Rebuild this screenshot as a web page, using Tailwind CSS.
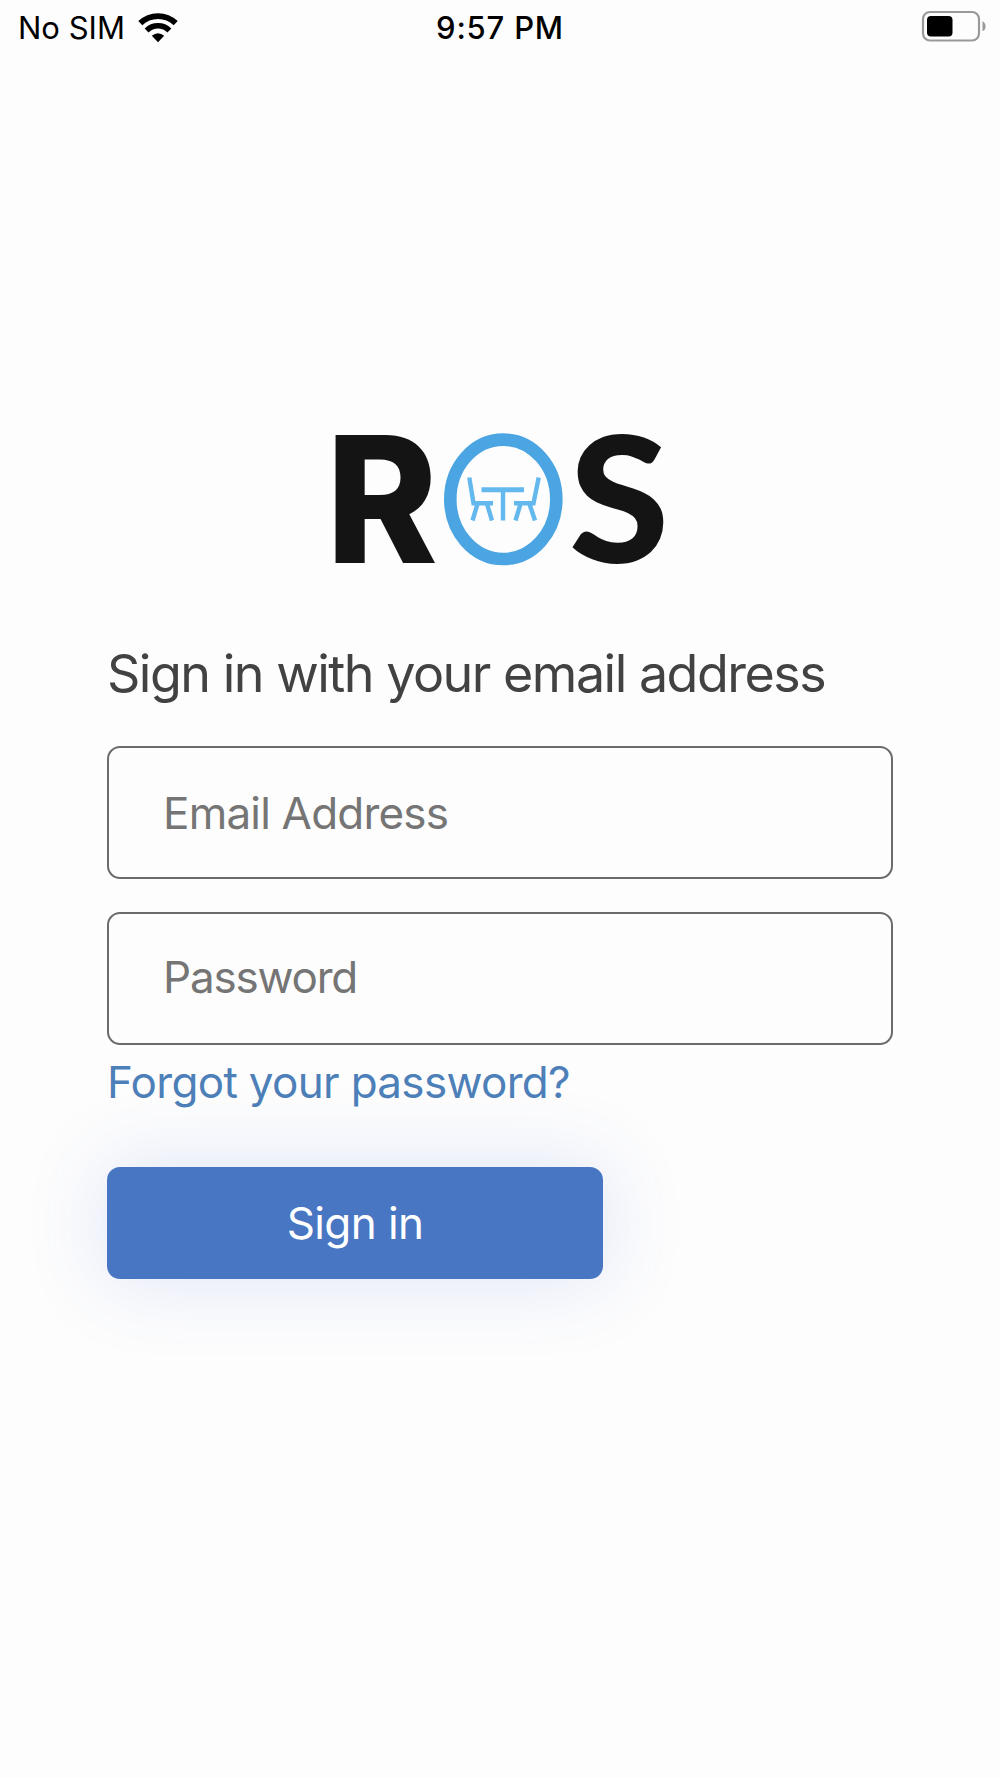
<!DOCTYPE html>
<html lang="en">
<head>
<meta charset="utf-8">
<title>Sign in</title>
<script src="https://cdn.jsdelivr.net/npm/@tailwindcss/browser@4"></script>
</head>
<body class="bg-[#fdfdfd] font-['Inter',sans-serif] w-[1000px] h-[1778px] overflow-hidden">
<header class="grid grid-cols-3 h-[54px] pl-[18px] pr-[14px] text-[31px] leading-[54px] text-black">
  <div class="flex items-center">
    <span class="w-[106px] pt-px whitespace-nowrap">No SIM</span>
    <svg class="ml-[14px] w-[40px] h-[30px]" viewBox="0 0 40 30" fill="none" stroke="#000">
      <path d="M2.3 10.2A25.5 25.5 0 0 1 37.7 10.2" stroke-width="5.8"/>
      <path d="M8.6 17.4A16.3 16.3 0 0 1 31.4 17.4" stroke-width="5.6"/>
      <path d="M13.8 22.8Q20 17.8 26.2 22.8L20 29.2Z" fill="#000" stroke="none"/>
    </svg>
  </div>
  <div class="pt-px pr-[4px] text-center font-[550] whitespace-nowrap tracking-[0.8px]">9:57 PM</div>
  <div class="flex items-start justify-end pt-[10px]">
    <svg class="w-[66px] h-[32px]" viewBox="0 0 66 32">
      <rect x="3" y="2" width="56" height="28.5" rx="7" fill="none" stroke="#999" stroke-width="2.2"/>
      <rect x="7" y="6" width="25.5" height="20.5" rx="4" fill="#000"/>
      <path d="M62.5 11.2Q65.5 12.5 65.5 16.2Q65.5 20 62.5 21.2Z" fill="#999"/>
    </svg>
  </div>
</header>
<main class="flex flex-col px-[107px] pt-[366px]">
  <svg class="w-[360px] h-[160px] ml-[213px] overflow-visible" viewBox="0 0 360 160" aria-label="ROS">
    <text transform="translate(6 143) scale(.96 1)" font-family="Inter" font-weight="800" font-size="176" fill="#141414">R</text>
    <text transform="translate(249 143) scale(1.04 1)" font-family="Lato" font-weight="900" font-size="175" fill="#141414">S</text>
    <ellipse cx="183.3" cy="79.3" rx="53" ry="59.7" fill="#fdfdfd" stroke="#4ba5e2" stroke-width="12.6"/>
    <g fill="none" stroke="#63b8ee" stroke-width="4.4">
      <path d="M161.5 69.7H204" stroke-width="5"/>
      <path d="M183 70V100.5M149.3 57.5L153.5 83.2H173M157.5 84L152.5 100.5M167 84L172 100.5"/>
      <path d="M218.7 57.5L213.5 83.2H194M200.5 84L195.5 100.5M209.5 84L215 100.5"/>
    </g>
  </svg>
  <h1 class="mt-[64px] h-[60px] leading-[60px] text-[52px] tracking-[-1.5px] text-[#424242] whitespace-nowrap">Sign in with your email address</h1>
  <form class="flex flex-col">
    <input type="email" placeholder="Email Address" class="mt-[42px] h-[133px] rounded-[13px] border-[2.5px] border-[#6b6b6b] pl-[54px] text-[44px] tracking-[-0.8px] placeholder:text-[#757575]">
    <input type="password" placeholder="Password" class="mt-[33px] h-[133px] rounded-[13px] border-[2.5px] border-[#6b6b6b] pl-[54px] pb-[3px] text-[44px] tracking-[-1.2px] placeholder:text-[#757575]">
    <a class="mt-[10px] h-[54px] leading-[54px] text-[44px] tracking-[-0.68px] text-[#4d80b8] whitespace-nowrap">Forgot your password?</a>
    <button type="button" class="mt-[58px] w-[496px] h-[112px] rounded-[13px] bg-[#4876c3] text-white text-[44px] tracking-[-0.6px] shadow-[0_0_80px_rgba(72,100,220,0.17)]">Sign in</button>
  </form>
</main>
</body>
</html>
